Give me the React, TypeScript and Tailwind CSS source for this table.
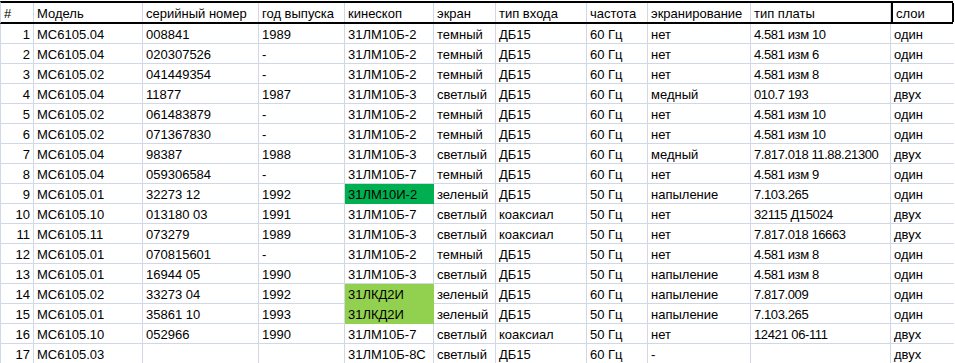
const header = [
  "#",
  "Модель",
  "серийный номер",
  "год выпуска",
  "кинескоп",
  "экран",
  "тип входа",
  "частота",
  "экранирование",
  "тип платы",
  "слои",
];

type Row = string[];

const rows: Row[] = [
  ["1", "МС6105.04", "008841", "1989", "31ЛМ10Б-2", "темный", "ДБ15", "60 Гц", "нет", "4.581 изм 10", "один"],
  ["2", "МС6105.04", "020307526", "-", "31ЛМ10Б-2", "темный", "ДБ15", "60 Гц", "нет", "4.581 изм 6", "один"],
  ["3", "МС6105.02", "041449354", "-", "31ЛМ10Б-2", "темный", "ДБ15", "60 Гц", "нет", "4.581 изм 8", "один"],
  ["4", "МС6105.04", "11877", "1987", "31ЛМ10Б-3", "светлый", "ДБ15", "60 Гц", "медный", "010.7 193", "двух"],
  ["5", "МС6105.02", "061483879", "-", "31ЛМ10Б-2", "темный", "ДБ15", "60 Гц", "нет", "4.581 изм 10", "один"],
  ["6", "МС6105.02", "071367830", "-", "31ЛМ10Б-2", "темный", "ДБ15", "60 Гц", "нет", "4.581 изм 10", "один"],
  ["7", "МС6105.04", "98387", "1988", "31ЛМ10Б-3", "светлый", "ДБ15", "60 Гц", "медный", "7.817.018 11.88.21300", "двух"],
  ["8", "МС6105.04", "059306584", "-", "31ЛМ10Б-7", "темный", "ДБ15", "60 Гц", "нет", "4.581 изм 9", "один"],
  ["9", "МС6105.01", "32273 12", "1992", "31ЛМ10И-2", "зеленый", "ДБ15", "50 Гц", "напыление", "7.103.265", "один"],
  ["10", "МС6105.10", "013180 03", "1991", "31ЛМ10Б-7", "светлый", "коаксиал", "50 Гц", "нет", "32115 Д15024", "двух"],
  ["11", "МС6105.11", "073279", "1989", "31ЛМ10Б-3", "светлый", "коаксиал", "50 Гц", "нет", "7.817.018 16663", "двух"],
  ["12", "МС6105.01", "070815601", "-", "31ЛМ10Б-2", "темный", "ДБ15", "50 Гц", "нет", "4.581 изм 8", "один"],
  ["13", "МС6105.01", "16944 05", "1990", "31ЛМ10Б-3", "светлый", "ДБ15", "50 Гц", "напыление", "4.581 изм 8", "один"],
  ["14", "МС6105.02", "33273 04", "1992", "31ЛКД2И", "зеленый", "ДБ15", "60 Гц", "напыление", "7.817.009", "один"],
  ["15", "МС6105.01", "35861 10", "1993", "31ЛКД2И", "зеленый", "ДБ15", "50 Гц", "напыление", "7.103.265", "один"],
  ["16", "МС6105.10", "052966", "1990", "31ЛМ10Б-7", "светлый", "коаксиал", "50 Гц", "нет", "12421 06-111", "двух"],
  ["17", "МС6105.03", "", "", "31ЛМ10Б-8С", "светлый", "ДБ15", "60 Гц", "-", "", "двух"],
];

const gridCols =
  "grid grid-cols-[33px_109px_116px_86px_89px_62px_91px_61px_103px_140px_63px]";

// fill colours for the кинескоп column (row index -> class)
const fills: Record<number, string> = {
  8: "bg-[#00b050] border-[#00b050]",
  13: "bg-[#92d050] border-[#92d050]",
  14: "bg-[#92d050] border-[#92d050]",
};

const App = () => {
  return (
    <div
      className="w-[955px] h-[363px] overflow-hidden bg-white text-black text-[13px]"
      style={{ fontFamily: '"Liberation Sans", Arial, sans-serif' }}
    >
      <div className="w-[953px] pt-px">
        {/* Header row */}
        <div className={`${gridCols} border-y-2 border-black border-l border-l-[#d0d7e5]`}>
          {header.map((h, i) => (
            <div
              key={i}
              className={`h-[19px] flex items-end leading-[16px] px-[3px] whitespace-nowrap ${
                i === header.length - 1
                  ? "shadow-[inset_2px_0_0_#000,inset_-2px_0_0_#000] pl-[5px]"
                  : "border-r border-[#d0d7e5]"
              }`}
            >
              {h}
            </div>
          ))}
        </div>

        {/* Body rows */}
        {rows.map((row, r) => (
          <div key={r} className={`${gridCols} border-l border-[#d0d7e5]`}>
            {row.map((cell, c) => {
              const fill = c === 4 ? fills[r] : undefined;
              const last = c === row.length - 1;
              return (
                <div
                  key={c}
                  className={`h-[20px] flex items-end leading-[16px] whitespace-nowrap border-b ${
                    last ? "" : "border-r"
                  } ${fill ?? "border-[#d0d7e5]"} ${
                    c === 0 ? "justify-end pr-[3px]" : "px-[3px]"
                  } ${c === 9 ? "tracking-[-0.4px]" : ""}`}
                >
                  {cell}
                </div>
              );
            })}
          </div>
        ))}
      </div>
    </div>
  );
};

export default App;
